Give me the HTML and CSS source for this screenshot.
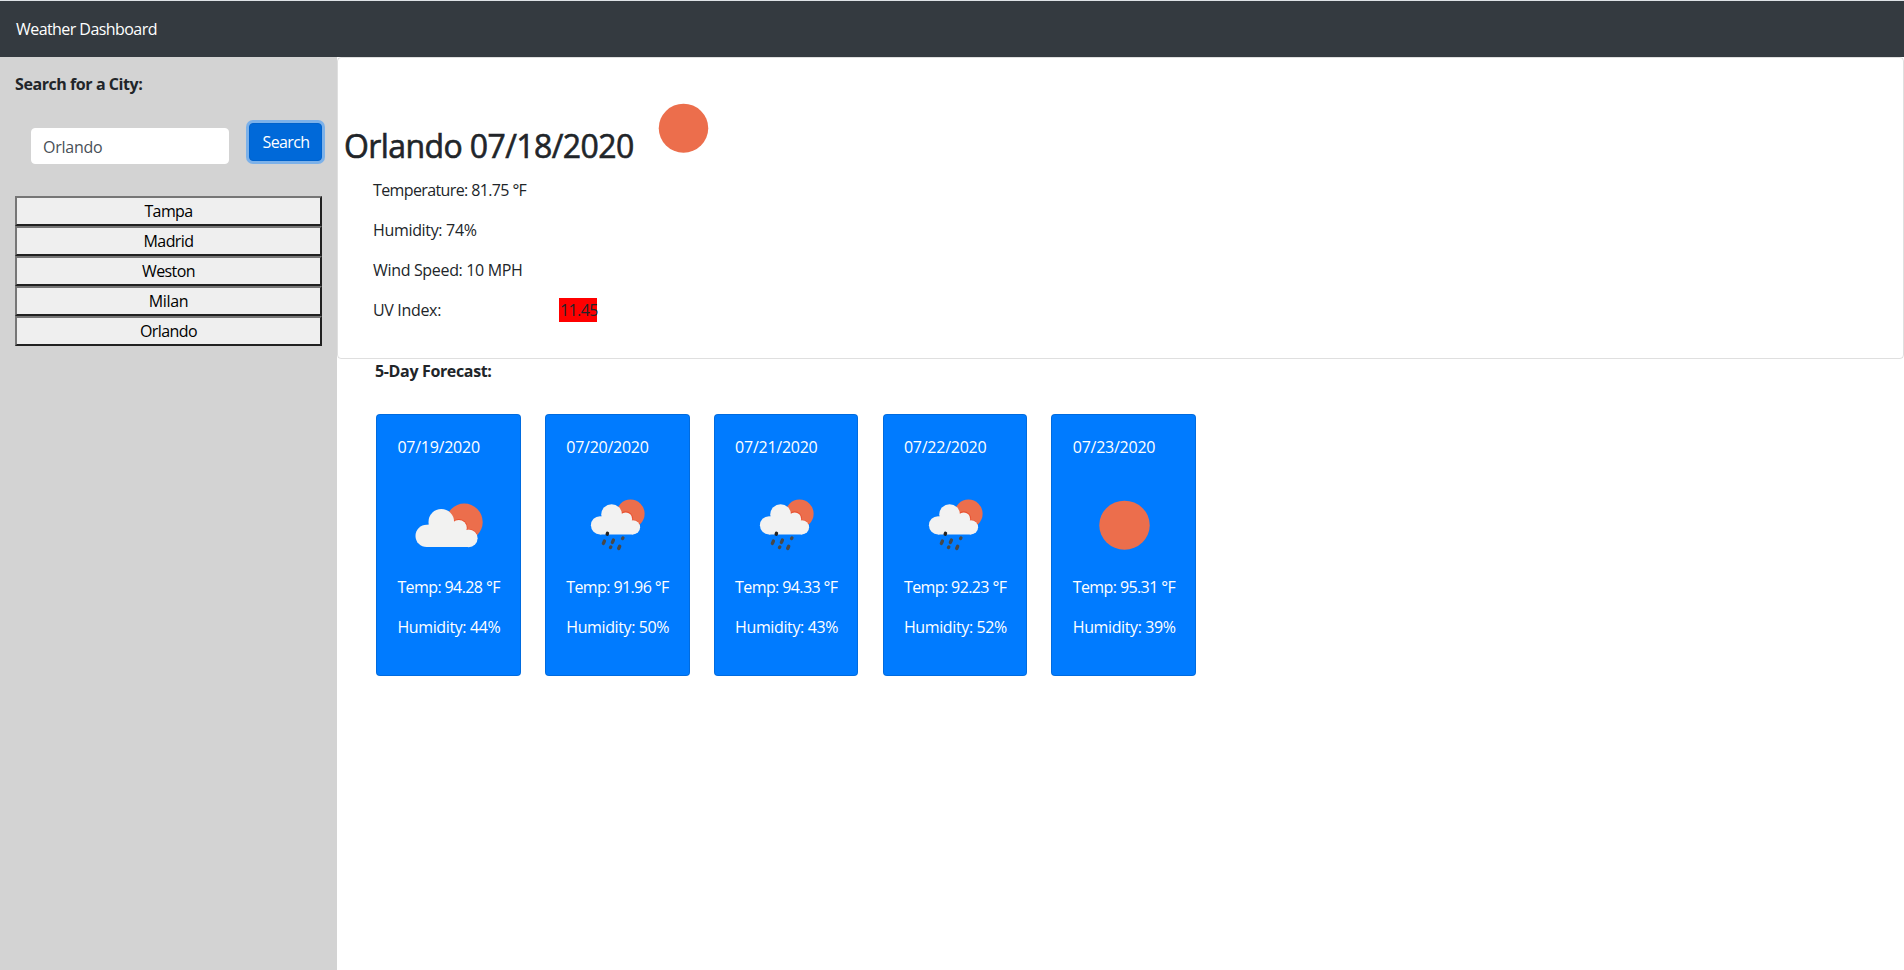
FILE: index.html
```html
<!DOCTYPE html>
<html lang="en">
<head>
<meta charset="utf-8">
<title>Weather Dashboard</title>
<link rel="stylesheet" href="styles.css">
</head>
<body>
<svg class="defs" aria-hidden="true">
  <symbol id="sun" viewBox="0 0 100 100" preserveAspectRatio="none"><circle cx="50" cy="50.2" r="24.5" fill="#ec6e4c"/></symbol>
  <symbol id="cloudy" viewBox="0 0 103 100" preserveAspectRatio="none">
    <circle cx="67.3" cy="47" r="18.4" fill="#ec6e4c"/>
    <g fill="#e8502f"><circle cx="61.8" cy="52.8" r="8.9"/><circle cx="72" cy="63.2" r="9.2" clip-path="url(#c1)"/></g>
    <g fill="#f2f2f1"><circle cx="29.7" cy="60.9" r="11.2"/><circle cx="44.3" cy="46.9" r="12.8"/><circle cx="61.8" cy="53" r="8"/><circle cx="71.7" cy="63.3" r="8.9"/><path d="M29.7 50 44 47 62 53 71 58V72.1H29.7z"/></g>
  </symbol>
  <clipPath id="c1"><rect x="60" y="50" width="20" height="9"/></clipPath>
  <symbol id="rain" viewBox="0 0 103 100" preserveAspectRatio="none">
    <circle cx="64.5" cy="38.7" r="14.1" fill="#ec6e4c"/>
    <g fill="#e8502f"><circle cx="59.7" cy="43.6" r="7.3"/><circle cx="67" cy="52.3" r="7.6" clip-path="url(#c2)"/></g>
    <g fill="#f2f2f2"><circle cx="34" cy="50.3" r="9.1"/><circle cx="45.6" cy="39.6" r="10.4"/><circle cx="59.7" cy="43.9" r="6.5"/><circle cx="67" cy="52.3" r="7.1"/><path d="M34 42 46 38 60 43 67 48V59.4H34z"/></g>
    <g stroke="#484848" stroke-width="3.4" stroke-linecap="round"><path d="m41.2 59.2.3-.9" stroke="#222"/><path d="m37.4 68.4 1-2.3M46.4 67.4l1-2.3M56.6 63.5l.3-.5M44.5 72.5l.3-.5M52.7 73.5l1-2.3"/></g>
  </symbol>
  <clipPath id="c2"><rect x="60" y="40" width="16" height="9"/></clipPath>
</svg>
<nav class="navbar">Weather Dashboard</nav>
<div class="layout">
  <aside class="sidebar">
    <p class="sidebar-title">Search for a City:</p>
    <div class="search"><input class="search-input" type="text" value="Orlando"><button class="search-btn">Search</button></div>
    <div class="cities"><button class="city">Tampa</button><button class="city">Madrid</button><button class="city">Weston</button><button class="city wide">Milan</button><button class="city">Orlando</button></div>
  </aside>
  <main class="main">
    <section class="current">
      <div class="headline"><h2 class="place">Orlando 07/18/2020</h2><svg class="icon-now"><use href="#sun"/></svg></div>
      <div class="stats">
        <p class="temperature">Temperature: 81.75 °F</p><p>Humidity: 74%</p><p>Wind Speed: 10 MPH</p>
        <p class="uv"><span class="uv-label">UV Index:</span><span class="uv-value">11.45</span></p>
      </div>
    </section>
    <p class="forecast-title">5-Day Forecast:</p>
    <section class="forecast">
      <article class="day"><p>07/19/2020</p><svg class="icon"><use href="#cloudy"/></svg><p class="temp">Temp: 94.28 °F</p><p class="hum">Humidity: 44%</p></article>
      <article class="day"><p>07/20/2020</p><svg class="icon"><use href="#rain"/></svg><p class="temp">Temp: 91.96 °F</p><p class="hum">Humidity: 50%</p></article>
      <article class="day"><p>07/21/2020</p><svg class="icon"><use href="#rain"/></svg><p class="temp">Temp: 94.33 °F</p><p class="hum">Humidity: 43%</p></article>
      <article class="day"><p>07/22/2020</p><svg class="icon"><use href="#rain"/></svg><p class="temp">Temp: 92.23 °F</p><p class="hum">Humidity: 52%</p></article>
      <article class="day"><p>07/23/2020</p><svg class="icon"><use href="#sun"/></svg><p class="temp">Temp: 95.31 °F</p><p class="hum">Humidity: 39%</p></article>
    </section>
  </main>
</div>
</body>
</html>
```
FILE: styles.css
```css
* { box-sizing: border-box; }
body {
  margin: 0;
  height: 970px;
  display: flex;
  flex-direction: column;
  border-top: 1px solid #dee2e6;
  font: 400 16px/24px "Segoe UI", "Open Sans", "Noto Sans", sans-serif;
  letter-spacing: -0.25px;
  color: #212529;
  background: #fff;
  overflow: hidden;
}
p, h2 { margin: 0; white-space: nowrap; }
button, input { font: inherit; letter-spacing: inherit; }
.defs { position: absolute; width: 0; height: 0; }
.navbar { height: 56px; flex: none; padding: 16px; background: #343a40; color: #fff; letter-spacing: -0.56px; }
.layout { display: flex; flex: 1; }
.sidebar { width: 337px; flex: none; padding: 15px 15px 0; background: #d3d3d3; }
.sidebar-title { font-weight: 700; letter-spacing: -0.43px; }
.search { display: flex; height: 100px; padding: 27px 0 0 16px; }
.search-input {
  width: 198px; height: 36px; margin: 5px 20px 0 0; padding: 2px 11px 0;
  border: 1px solid #fff; border-radius: 4px; background: #fff; color: #495057;
}
.search-btn {
  width: 73px; height: 38px; padding: 0 0 0 1px;
  border: 1px solid #0062cc; border-radius: 4px; background: #0069d9; color: #fff;
  box-shadow: 0 0 0 3px rgba(38, 143, 255, .5);
  letter-spacing: -0.6px;
}
.cities { display: flex; flex-direction: column; }
.city {
  height: 30px; padding: 1px 6px;
  border: 2px solid; border-color: #767676 #212121 #212121 #767676;
  background: #efefef; color: #000; letter-spacing: -0.6px;
}
.wide { letter-spacing: -0.3px; }
.main { flex: 1; }
.current { height: 302px; padding: 20px 5px 0; border: 1px solid rgba(0, 0, 0, .125); border-radius: 4px; }
.headline { display: flex; height: 100px; }
.place { width: 290px; padding: 49px 0 0 1px; font-size: 32px; line-height: 38px; font-weight: 500; letter-spacing: -0.6px; -webkit-text-stroke: 0.6px #212529; }
.icon-now { width: 101px; height: 100px; }
.stats { display: flex; flex-direction: column; gap: 16px; padding-left: 30px; letter-spacing: -0.33px; }
.temperature { letter-spacing: -0.62px; }
.uv { display: flex; }
.uv-label { width: 186px; }
.uv-value { width: 38px; height: 24px; padding-left: 1px; background: #f00; letter-spacing: -0.6px; }
.forecast-title { padding-left: 38px; font-weight: 700; letter-spacing: -0.35px; }
.forecast { display: flex; gap: 24.05px; padding: 31px 0 0 39px; }
.day { width: 144.8px; height: 262px; flex: none; padding: 20px 20px 20px 20.4px; border: 1px solid rgba(0, 0, 0, .125); border-radius: 4px; background: #007bff; color: #fff; }
.icon { display: block; width: 103px; height: 100px; margin-top: 16px; }
.temp { letter-spacing: -0.6px; }
.hum { margin-top: 16px; letter-spacing: -0.38px; }
```
